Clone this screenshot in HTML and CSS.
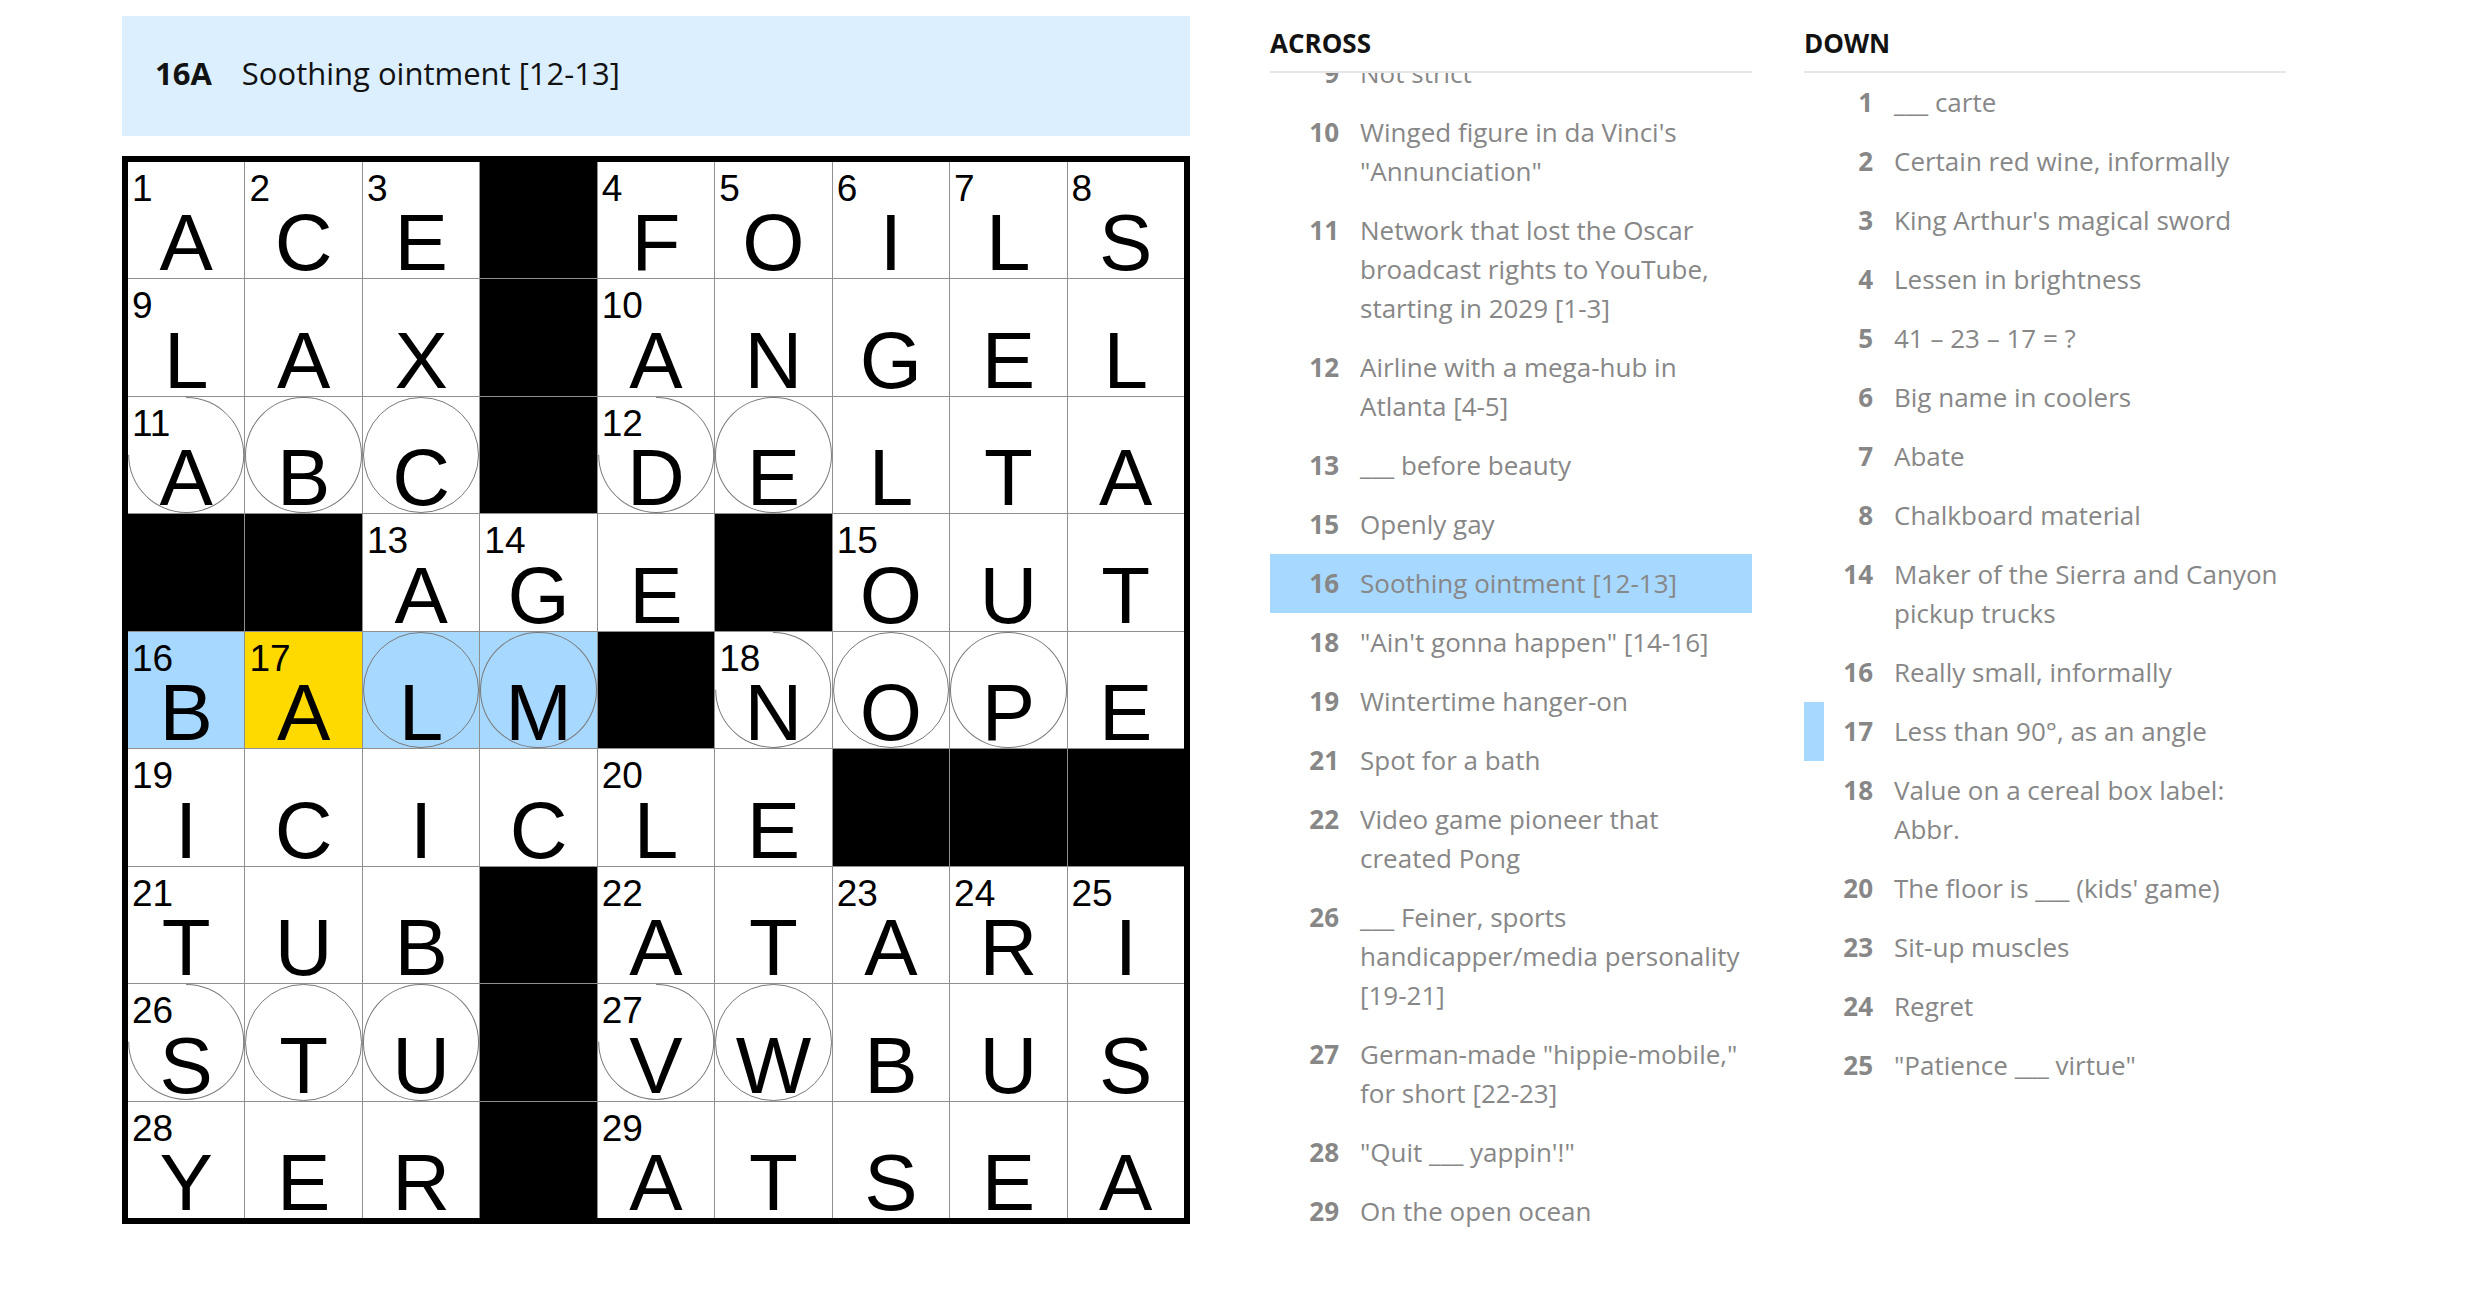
FILE: index.html
```html
<!DOCTYPE html>
<html lang="en">
<head>
<meta charset="utf-8">
<title>Crossword</title>
<link rel="stylesheet" href="styles.css">
</head>
<body>
<div class="page">
  <div class="board">
    <div class="banner"><span class="banner-num">16A</span><span class="banner-text">Soothing ointment [12-13]</span></div>
    <div class="grid">
      <div class="cell"><span class="n">1</span><span class="l">A</span></div>
      <div class="cell"><span class="n">2</span><span class="l">C</span></div>
      <div class="cell"><span class="n">3</span><span class="l">E</span></div>
      <div class="cell blk"></div>
      <div class="cell"><span class="n">4</span><span class="l">F</span></div>
      <div class="cell"><span class="n">5</span><span class="l">O</span></div>
      <div class="cell"><span class="n">6</span><span class="l">I</span></div>
      <div class="cell"><span class="n">7</span><span class="l">L</span></div>
      <div class="cell"><span class="n">8</span><span class="l">S</span></div>

      <div class="cell"><span class="n">9</span><span class="l">L</span></div>
      <div class="cell"><span class="l">A</span></div>
      <div class="cell"><span class="l">X</span></div>
      <div class="cell blk"></div>
      <div class="cell"><span class="n">10</span><span class="l">A</span></div>
      <div class="cell"><span class="l">N</span></div>
      <div class="cell"><span class="l">G</span></div>
      <div class="cell"><span class="l">E</span></div>
      <div class="cell"><span class="l">L</span></div>

      <div class="cell circ numbered"><span class="n">11</span><span class="l">A</span></div>
      <div class="cell circ"><span class="l">B</span></div>
      <div class="cell circ"><span class="l">C</span></div>
      <div class="cell blk"></div>
      <div class="cell circ numbered"><span class="n">12</span><span class="l">D</span></div>
      <div class="cell circ"><span class="l">E</span></div>
      <div class="cell"><span class="l">L</span></div>
      <div class="cell"><span class="l">T</span></div>
      <div class="cell"><span class="l">A</span></div>

      <div class="cell blk"></div>
      <div class="cell blk"></div>
      <div class="cell"><span class="n">13</span><span class="l">A</span></div>
      <div class="cell"><span class="n">14</span><span class="l">G</span></div>
      <div class="cell"><span class="l">E</span></div>
      <div class="cell blk"></div>
      <div class="cell"><span class="n">15</span><span class="l">O</span></div>
      <div class="cell"><span class="l">U</span></div>
      <div class="cell"><span class="l">T</span></div>

      <div class="cell hl"><span class="n">16</span><span class="l">B</span></div>
      <div class="cell sel"><span class="n">17</span><span class="l">A</span></div>
      <div class="cell hl circ"><span class="l">L</span></div>
      <div class="cell hl circ"><span class="l">M</span></div>
      <div class="cell blk"></div>
      <div class="cell circ numbered"><span class="n">18</span><span class="l">N</span></div>
      <div class="cell circ"><span class="l">O</span></div>
      <div class="cell circ"><span class="l">P</span></div>
      <div class="cell"><span class="l">E</span></div>

      <div class="cell"><span class="n">19</span><span class="l">I</span></div>
      <div class="cell"><span class="l">C</span></div>
      <div class="cell"><span class="l">I</span></div>
      <div class="cell"><span class="l">C</span></div>
      <div class="cell"><span class="n">20</span><span class="l">L</span></div>
      <div class="cell"><span class="l">E</span></div>
      <div class="cell blk"></div>
      <div class="cell blk"></div>
      <div class="cell blk"></div>

      <div class="cell"><span class="n">21</span><span class="l">T</span></div>
      <div class="cell"><span class="l">U</span></div>
      <div class="cell"><span class="l">B</span></div>
      <div class="cell blk"></div>
      <div class="cell"><span class="n">22</span><span class="l">A</span></div>
      <div class="cell"><span class="l">T</span></div>
      <div class="cell"><span class="n">23</span><span class="l">A</span></div>
      <div class="cell"><span class="n">24</span><span class="l">R</span></div>
      <div class="cell"><span class="n">25</span><span class="l">I</span></div>

      <div class="cell circ numbered"><span class="n">26</span><span class="l">S</span></div>
      <div class="cell circ"><span class="l">T</span></div>
      <div class="cell circ"><span class="l">U</span></div>
      <div class="cell blk"></div>
      <div class="cell circ numbered"><span class="n">27</span><span class="l">V</span></div>
      <div class="cell circ"><span class="l">W</span></div>
      <div class="cell"><span class="l">B</span></div>
      <div class="cell"><span class="l">U</span></div>
      <div class="cell"><span class="l">S</span></div>

      <div class="cell"><span class="n">28</span><span class="l">Y</span></div>
      <div class="cell"><span class="l">E</span></div>
      <div class="cell"><span class="l">R</span></div>
      <div class="cell blk"></div>
      <div class="cell"><span class="n">29</span><span class="l">A</span></div>
      <div class="cell"><span class="l">T</span></div>
      <div class="cell"><span class="l">S</span></div>
      <div class="cell"><span class="l">E</span></div>
      <div class="cell"><span class="l">A</span></div>
    </div>
  </div>

  <div class="clues">
    <div class="col">
      <h3 class="col-title">ACROSS</h3>
      <div class="list-wrap bottom">
        <ol class="list">
          <li class="clue"><span class="num">1</span><span class="txt">Top-notch</span></li>
          <li class="clue"><span class="num">4</span><span class="txt">Thwarts</span></li>
          <li class="clue"><span class="num">9</span><span class="txt">Not strict</span></li>
          <li class="clue"><span class="num">10</span><span class="txt">Winged figure in da Vinci's "Annunciation"</span></li>
          <li class="clue"><span class="num">11</span><span class="txt">Network that lost the Oscar broadcast rights to YouTube, starting in 2029 [1-3]</span></li>
          <li class="clue"><span class="num">12</span><span class="txt">Airline with a mega-hub in Atlanta [4-5]</span></li>
          <li class="clue"><span class="num">13</span><span class="txt">___ before beauty</span></li>
          <li class="clue"><span class="num">15</span><span class="txt">Openly gay</span></li>
          <li class="clue selected"><span class="num">16</span><span class="txt">Soothing ointment [12-13]</span></li>
          <li class="clue"><span class="num">18</span><span class="txt">"Ain't gonna happen" [14-16]</span></li>
          <li class="clue"><span class="num">19</span><span class="txt">Wintertime hanger-on</span></li>
          <li class="clue"><span class="num">21</span><span class="txt">Spot for a bath</span></li>
          <li class="clue"><span class="num">22</span><span class="txt">Video game pioneer that created Pong</span></li>
          <li class="clue"><span class="num">26</span><span class="txt">___ Feiner, sports handicapper/media personality [19-21]</span></li>
          <li class="clue"><span class="num">27</span><span class="txt">German-made "hippie-mobile," for short [22-23]</span></li>
          <li class="clue"><span class="num">28</span><span class="txt">"Quit ___ yappin'!"</span></li>
          <li class="clue"><span class="num">29</span><span class="txt">On the open ocean</span></li>
        </ol>
      </div>
    </div>
    <div class="col">
      <h3 class="col-title">DOWN</h3>
      <div class="list-wrap">
        <ol class="list">
          <li class="clue"><span class="num">1</span><span class="txt">___ carte</span></li>
          <li class="clue"><span class="num">2</span><span class="txt">Certain red wine, informally</span></li>
          <li class="clue"><span class="num">3</span><span class="txt">King Arthur's magical sword</span></li>
          <li class="clue"><span class="num">4</span><span class="txt">Lessen in brightness</span></li>
          <li class="clue"><span class="num">5</span><span class="txt">41 – 23 – 17 = ?</span></li>
          <li class="clue"><span class="num">6</span><span class="txt">Big name in coolers</span></li>
          <li class="clue"><span class="num">7</span><span class="txt">Abate</span></li>
          <li class="clue"><span class="num">8</span><span class="txt">Chalkboard material</span></li>
          <li class="clue"><span class="num">14</span><span class="txt">Maker of the Sierra and Canyon pickup trucks</span></li>
          <li class="clue"><span class="num">16</span><span class="txt">Really small, informally</span></li>
          <li class="clue related"><span class="num">17</span><span class="txt">Less than 90°, as an angle</span></li>
          <li class="clue"><span class="num">18</span><span class="txt">Value on a cereal box label: Abbr.</span></li>
          <li class="clue"><span class="num">20</span><span class="txt">The floor is ___ (kids' game)</span></li>
          <li class="clue"><span class="num">23</span><span class="txt">Sit-up muscles</span></li>
          <li class="clue"><span class="num">24</span><span class="txt">Regret</span></li>
          <li class="clue"><span class="num">25</span><span class="txt">"Patience ___ virtue"</span></li>
        </ol>
      </div>
    </div>
  </div>
</div>
</body>
</html>
```

FILE: styles.css
```css
html, body {
  margin: 0;
  padding: 0;
  background: #fff;
}

.page {
  display: flex;
  align-items: flex-start;
  gap: 80px;
  padding: 16px 0 0 122px;
  font-family: "Open Sans", "Liberation Sans", sans-serif;
}

.board {
  width: 1068px;
  display: flex;
  flex-direction: column;
  gap: 20px;
}

.banner {
  box-sizing: border-box;
  height: 120px;
  background: #dcefff;
  display: flex;
  align-items: center;
  padding: 0 0 6px 33px;
  color: #121212;
  font-size: 31px;
}

.banner-num {
  font-weight: 700;
  margin-right: 30px;
}

.grid {
  box-sizing: border-box;
  width: 1068px;
  height: 1068px;
  border: 6px solid #000;
  background: #8f8f8f;
  display: grid;
  grid-template-columns: repeat(9, 1fr);
  grid-template-rows: repeat(9, 1fr);
  gap: 1px;
  font-family: "Liberation Sans", Arial, sans-serif;
  color: #000;
}

.cell {
  position: relative;
  background: #fff;
  display: flex;
  flex-direction: column;
  min-width: 0;
  min-height: 0;
}

.cell.blk { background: #000; }
.cell.hl { background: #a7d8ff; }
.cell.sel { background: #ffda00; }

.cell.circ::after {
  content: "";
  position: absolute;
  inset: 0;
  border: 1px solid #7a7a7a;
  border-radius: 50%;
  pointer-events: none;
}

.cell.circ.numbered::after {
  border-left-color: transparent;
  transform: rotate(45deg);
}

.n {
  font-size: 37px;
  line-height: 37px;
  padding: 8px 0 0 4px;
}

.l {
  margin-top: auto;
  text-align: center;
  font-size: 80px;
  line-height: 70px;
}

.clues {
  display: flex;
  gap: 52px;
}

.col {
  width: 482px;
}

.col-title {
  margin: 0;
  padding: 12px 0 13px;
  font-size: 26px;
  line-height: 30px;
  font-weight: 700;
  color: #121212;
  border-bottom: 2px solid #e6e6e6;
}

.list-wrap {
  height: 1168px;
  overflow: hidden;
  display: flex;
  flex-direction: column;
}

.list-wrap.bottom {
  flex-direction: column-reverse;
}

.list {
  list-style: none;
  margin: 0;
  padding: 0;
  flex: none;
}

.clue {
  display: flex;
  padding: 10px 2px 10px 0;
  border-left: 20px solid transparent;
  font-size: 26px;
  line-height: 39px;
  color: #878787;
}

.clue.selected {
  background: #a7d8ff;
  border-left-color: #a7d8ff;
}

.clue.related {
  border-left-color: #a7d8ff;
}

.num {
  flex: none;
  width: 49px;
  margin-right: 21px;
  text-align: right;
  font-weight: 700;
}

.txt {
  flex: 1;
}
```
